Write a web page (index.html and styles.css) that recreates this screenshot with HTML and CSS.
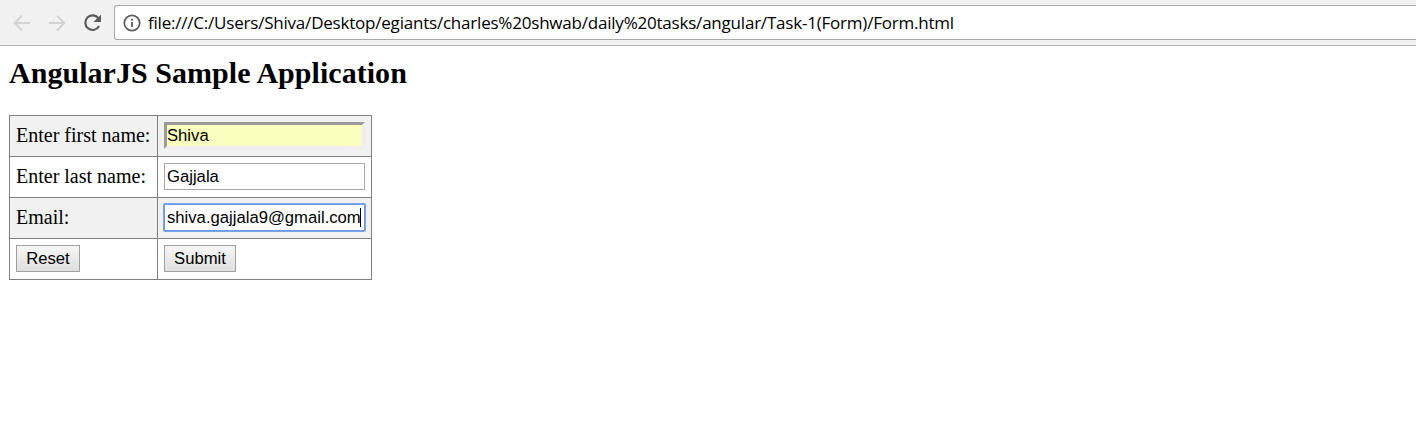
FILE: index.html
```html
<!DOCTYPE html>
<html lang="en">
<head>
<meta charset="utf-8">
<title>AngularJS Sample Application</title>
<link rel="stylesheet" href="styles.css">
</head>
<body>
<header class="toolbar">
  <svg class="nav" width="100" height="24" viewBox="0 0 100 24" fill="none">
    <g stroke="#d2d2d2" stroke-width="1.8">
      <path d="M22 12H7M14 4.5L6.700 12l7.300 7.500"/>
      <path d="M41 12h15M49 4.500l7.300 7.500-7.300 7.500"/>
    </g>
    <path d="M90.800 7.800A7.300 7.300 0 1 0 91.100 15" stroke="#5a5a5a" stroke-width="2.200"/>
    <path d="M93 3.800v7.200h-7.600z" fill="#5a5a5a"/>
  </svg>
  <div class="address">
    <svg class="info" width="18" height="18" viewBox="0 0 18 18" fill="none" stroke="#5a5a5a">
      <circle cx="9" cy="9" r="7.700" stroke-width="1.700"/>
      <path d="M9 8v5M9 4.700v1.800" stroke-width="1.800"/>
    </svg>
    <span class="url">file:///C:/Users/Shiva/Desktop/egiants/charles%20shwab/daily%20tasks/angular/Task-1(Form)/Form.html</span>
  </div>
</header>
<main class="page">
  <h2 class="title">AngularJS Sample Application</h2>
  <form>
    <table class="form-table">
      <tr class="odd"><td class="label">Enter first name:</td><td class="value"><input class="field autofilled" type="text" value="Shiva"></td></tr>
      <tr><td class="label">Enter last name:</td><td class="value"><input class="field" type="text" value="Gajjala"></td></tr>
      <tr class="odd"><td class="label">Email:</td><td class="value"><div class="field active"><span>shiva.gajjala9@gmail.com</span><i class="caret"></i></div></td></tr>
      <tr><td class="label"><button class="btn reset" type="button">Reset</button></td><td class="value"><button class="btn submit" type="button">Submit</button></td></tr>
    </table>
  </form>
</main>
</body>
</html>
```
FILE: styles.css
```css
* { box-sizing: border-box; }
body { margin: 0; background: #fff; color: #000; overflow: hidden; }
.toolbar {
  display: flex;
  align-items: flex-start;
  height: 46px;
  padding: 5px 0 0 8px;
  background: #f1f1f1;
  border-bottom: 1px solid #b4b4b4;
}
.nav { flex: none; margin: 6px 6px 0 0; }
.address {
  flex: 1;
  display: flex;
  align-items: center;
  height: 35px;
  padding-left: 8px;
  background: #fff;
  border: 1px solid #a9a9a9;
  border-right: 0;
  border-radius: 3px 0 0 3px;
}
.info { flex: none; margin-right: 7px; }
.url { font: 17px/24px "Open Sans", sans-serif; letter-spacing: -0.21px; white-space: nowrap; }
.page { padding: 9px 9px; }
.title { margin: 0 0 25px; font: bold 30px/35px "Liberation Serif", serif; letter-spacing: 0.04px; }
.form-table {
  width: 363px;
  table-layout: fixed;
  border-spacing: 1px;
  background: #808080;
}
.form-table td { height: 40px; padding: 0 6px 1px; background: #fff; vertical-align: middle; }
.form-table .odd td { background: #f1f1f1; }
.label { width: 147px; font: 20px/23px "Liberation Serif", serif; white-space: nowrap; }
.value { width: 213px; }
.field {
  display: block;
  width: 201px;
  height: 27px;
  margin: 0;
  padding: 0 2px;
  border: 1px solid #a9a9a9;
  background: #fff;
  color: #000;
  font: 16.67px/23px "Liberation Sans", Arial, sans-serif;
}
.autofilled {
  padding: 1px 0 0;
  border-style: solid;
  border-width: 3px;
  border-color: #9a9a9a #eee #eee #9a9a9a;
  background: #faffbd;
}
.active {
  display: flex;
  align-items: center;
  padding: 0 2px;
  border-color: #6899e2;
  box-shadow: 0 0 0 1px #79a5e8;
  border-radius: 1px;
  white-space: nowrap;
}
.active span { margin-right: -1px; }
.caret { flex: none; width: 1px; height: 19px; background: #000; }
.btn {
  display: block;
  height: 27px;
  margin: 0;
  padding: 0;
  border: 1px solid #a0a0a0;
  border-radius: 0;
  background: linear-gradient(#f6f6f6, #dedede);
  color: #000;
  font: 16.67px/23px "Liberation Sans", Arial, sans-serif;
}
.reset { width: 64px; }
.submit { width: 72px; }
```
